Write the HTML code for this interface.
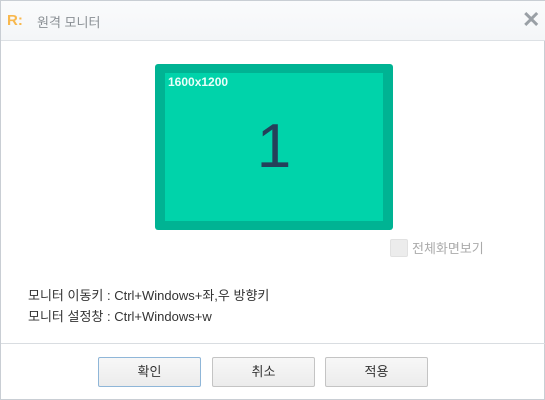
<!DOCTYPE html>
<html><head><meta charset="utf-8"><style>
*{margin:0;padding:0;box-sizing:border-box}
body{width:545px;height:400px;background:#fff;font-family:"Liberation Sans","Noto Sans CJK KR",sans-serif;position:relative;overflow:hidden;border:1px solid #c9ced4}
.tb{position:absolute;left:0;top:0;width:545px;height:40px;background:linear-gradient(#fafbfc,#f4f6f8);border-bottom:1px solid #dde1e5}
.logo{position:absolute;left:6px;top:11px;font-weight:bold;color:#f8b84e;font-size:15px}
.title{position:absolute;left:36px;top:11px;color:#8a8f94;font-size:13px}
.x{position:absolute;left:521px;top:6px;color:#9aa0a6;font-size:22px;font-weight:bold}
.mon{position:absolute;left:154px;top:63px;width:238px;height:166px;background:#00b393;border-radius:3px}
.in{position:absolute;left:10px;top:9px;width:218px;height:148px;background:#00d3aa}
.res{position:absolute;left:3px;top:2px;color:#eafff9;font-weight:bold;font-size:12px}
.one{position:absolute;left:0;width:100%;top:38px;text-align:center;font-size:62px;color:#25405a}
.cb{position:absolute;left:389px;top:238px;width:18px;height:18px;border:1px solid #e1e1e1;background:#ececec;border-radius:2px}
.cbl{position:absolute;left:411px;top:237px;color:#aaa;font-size:13px}
.t{position:absolute;left:27px;font-size:13px;color:#333}
.sep{position:absolute;left:0;top:342px;width:545px;height:1px;background:#d9dde1}
.b{position:absolute;top:356px;width:103px;height:30px;border:1px solid #c4c4c4;background:linear-gradient(#f7f7f7,#ececec);text-align:center;line-height:28px;font-size:13px;color:#333;border-radius:2px}
</style></head><body>
<div class="tb"><div class="logo">R:</div><div class="title">원격 모니터</div><div class="x">✕</div></div>
<div class="mon"><div class="in"><div class="res">1600x1200</div><div class="one">1</div></div></div>
<div class="cb"></div><div class="cbl">전체화면보기</div>
<div class="t" style="top:284px">모니터 이동키 : Ctrl+Windows+좌,우 방향키</div>
<div class="t" style="top:305px">모니터 설정창 : Ctrl+Windows+w</div>
<div class="sep"></div>
<div class="b" style="left:97px;border-color:#8fb6d8">확인</div>
<div class="b" style="left:211px">취소</div>
<div class="b" style="left:324px">적용</div>
</body></html>
